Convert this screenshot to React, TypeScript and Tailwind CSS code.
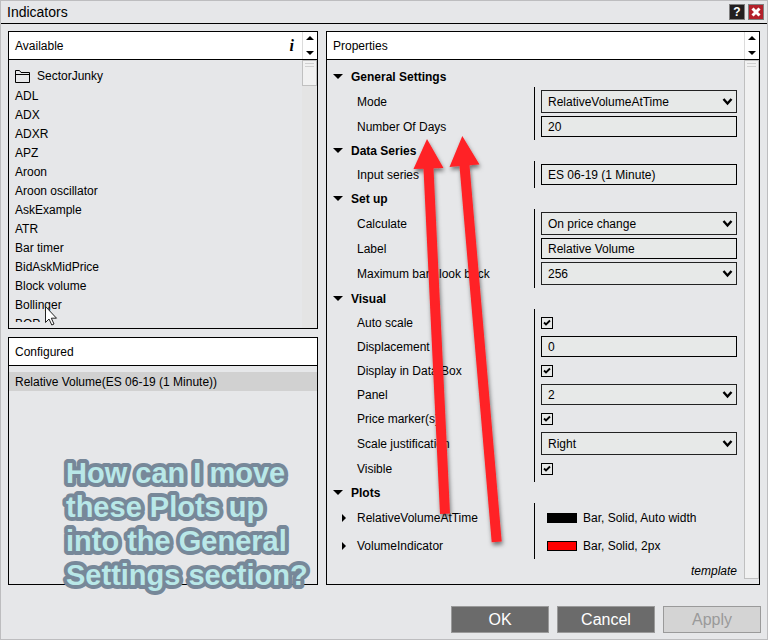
import { useState } from 'react';
import type { ReactNode } from 'react';

const available = [
  'ADL',
  'ADX',
  'ADXR',
  'APZ',
  'Aroon',
  'Aroon oscillator',
  'AskExample',
  'ATR',
  'Bar timer',
  'BidAskMidPrice',
  'Block volume',
  'Bollinger',
  'BOP',
];

function Spinner() {
  return (
    <div className="flex w-[15px] shrink-0 flex-col items-center justify-between border-l border-[#dcdcdc] py-1">
      <button aria-label="Previous">
        <svg className="block" width="8" height="4" viewBox="0 0 8 4">
          <path d="M0 4L4 0L8 4Z" />
        </svg>
      </button>
      <button aria-label="Next">
        <svg className="block" width="8" height="4" viewBox="0 0 8 4">
          <path d="M0 0L4 4L8 0Z" />
        </svg>
      </button>
    </div>
  );
}

function PanelHeader({ title, children }: { title: string; children?: ReactNode }) {
  return (
    <div className="flex h-7 shrink-0 border-b border-black bg-white">
      <h2 className="flex flex-1 items-center pl-[6px]">{title}</h2>
      {children}
    </div>
  );
}

function Thumb({ full = false }: { full?: boolean }) {
  return (
    <div className={`flex flex-col gap-[2px] border border-[#c0c0c0] bg-[#f1f1f1] px-[2px] pt-[2px] ${full ? 'flex-1' : 'h-[26px]'}`}>
      <div className="h-px bg-[#d0d0d0]" />
      <div className="h-px bg-[#d0d0d0]" />
    </div>
  );
}

function Section({ title, children }: { title: string; children: ReactNode }) {
  return (
    <section>
      <h3 className="flex h-[21px] items-center gap-2 pl-[6px] font-bold">
        <svg width="10" height="5" viewBox="0 0 10 5">
          <path d="M0 0H10L5 5Z" />
        </svg>
        {title}
      </h3>
      <div>{children}</div>
    </section>
  );
}

/* Each row draws its own slice of the vertical divider */
function Row({ label, id, children }: { label: string; id: string; children: ReactNode }) {
  return (
    <div className="group flex">
      <label htmlFor={id} className="flex w-[207px] shrink-0 items-center pt-[3px] pl-[30px] group-last:pb-[3px]">
        {label}
      </label>
      <div className="flex min-h-6 flex-1 items-center border-l border-black pt-[3px] pl-[6px] group-last:min-h-[27px] group-last:pb-[3px]">
        {children}
      </div>
    </div>
  );
}

function TextRow({ label, id, value }: { label: string; id: string; value: string }) {
  return (
    <Row label={label} id={id}>
      <input
        id={id}
        type="text"
        defaultValue={value}
        className="h-[21px] w-full border border-black bg-[#e7e9e8] pl-[6px] outline-none"
      />
    </Row>
  );
}

function SelectRow({ label, id, value, short = false }: { label: string; id: string; value: string; short?: boolean }) {
  return (
    <Row label={label} id={id}>
      <div className="relative w-full">
        <select
          id={id}
          defaultValue={value}
          className={`block w-full appearance-none border border-[#222222] bg-[#e7e9e8] pl-[6px] outline-none ${short ? 'h-[21px]' : 'h-[23px]'}`}
        >
          <option>{value}</option>
        </select>
        <svg className="pointer-events-none absolute inset-y-0 right-1 my-auto" width="11" height="9" viewBox="0 0 11 9" fill="none">
          <path d="M1.5 2L5.5 6.5L9.5 2" stroke="black" strokeWidth="2.4" />
        </svg>
      </div>
    </Row>
  );
}

function CheckRow({ label, id }: { label: string; id: string }) {
  const [on, setOn] = useState(true);
  return (
    <Row label={label} id={id}>
      <div className="relative">
        <input
          id={id}
          type="checkbox"
          checked={on}
          onChange={() => setOn(!on)}
          className="block h-3 w-3 appearance-none border border-black bg-[#e7e9e8]"
        />
        {on && (
          <svg className="pointer-events-none absolute inset-0" width="12" height="12" viewBox="0 0 12 12" fill="none">
            <path d="M3 5.5L5 7.5L9 3.5" stroke="black" strokeWidth="1.8" />
          </svg>
        )}
      </div>
    </Row>
  );
}

function PlotRow({ label, swatch, text }: { label: string; swatch: string; text: string }) {
  return (
    <div className="flex h-7">
      <button className="flex w-[207px] shrink-0 items-center gap-[11px] pt-[2px] pl-[15px] text-left">
        <svg width="4" height="8" viewBox="0 0 4 8">
          <path d="M0 0L4 4L0 8Z" />
        </svg>
        {label}
      </button>
      <div className="flex flex-1 items-center gap-[6px] border-l border-black pt-[2px] pl-3">
        <span className={`h-[10px] w-[30px] border border-black ${swatch}`} />
        {text}
      </div>
    </div>
  );
}

function Annotations() {
  return (
    <svg className="pointer-events-none absolute top-0 left-0" width="766" height="638" viewBox="1 1 766 638">
      <defs>
        <filter id="shadow" x="-50%" y="-10%" width="200%" height="120%">
          <feDropShadow dx="1" dy="3" stdDeviation="2" floodColor="#000000" floodOpacity="0.5" />
        </filter>
      </defs>
      <g fill="#ff2226" filter="url(#shadow)">
        <path d="M427 139L443.5 168L433.5 168.3L450 513.5L440 514L423.5 168.7L413.5 169Z" />
        <path d="M462.3 136L479.5 164.5L469.5 165.3L501.7 541.5L491.7 542.3L459.5 166L449.5 167Z" />
      </g>
      <text
        className="font-['Liberation_Sans',Arial,sans-serif] text-[29px] font-bold"
        fill="#b9e8e8"
        stroke="#778899"
        strokeWidth="8"
        strokeLinejoin="round"
        paintOrder="stroke"
      >
        <tspan x="66" y="483">How can I move</tspan>
        <tspan x="66" y="517">these Plots up</tspan>
        <tspan x="66" y="551">into the General</tspan>
        <tspan x="66" y="585">Settings section?</tspan>
      </text>
      <path
        d="M45.5 306.5V322.5L49 319L51.8 325L54 324L51.3 318.2H56.5Z"
        fill="white"
        stroke="#222222"
        strokeWidth="1"
      />
    </svg>
  );
}

export default function App() {
  return (
    <div className="relative flex min-h-screen flex-col border border-[#bdbdbf] bg-[#e6e7e9] font-['Liberation_Sans',Arial,sans-serif] text-xs text-black">
      <header className="flex h-[23px] items-center border-b border-black pr-[3px] pl-[6px]">
        <h1 className="flex-1 text-sm">Indicators</h1>
        <div className="flex gap-[3px]">
          <button
            aria-label="Help"
            className="flex h-4 w-4 items-center justify-center border border-[#808080] bg-[#231f20] text-xs font-bold text-white"
          >
            ?
          </button>
          <button aria-label="Close" className="flex h-4 w-4 items-center justify-center border border-[#808080] bg-[#b3202a]">
            <svg width="10" height="10" viewBox="0 0 10 10">
              <path d="M1.5 1.5L8.5 8.5M8.5 1.5L1.5 8.5" stroke="white" strokeWidth="3" />
            </svg>
          </button>
        </div>
      </header>

      <main className="grid grid-cols-[5fr_7fr] gap-2 px-[7px] pt-[7px]">
        <div className="flex flex-col gap-2">
          {/* Available */}
          <section className="flex h-[298px] flex-col border border-black">
            <PanelHeader title="Available">
              <button
                aria-label="Information"
                className="pr-2 font-['Liberation_Serif',serif] text-base font-bold italic"
              >
                i
              </button>
              <Spinner />
            </PanelHeader>
            <div className="flex min-h-0 flex-1">
              <div className="mb-[6px] flex-1 overflow-hidden pt-[6px] pl-[6px]">
                <div className="flex h-5 items-center gap-[7px]">
                  <svg width="15" height="13" viewBox="0 0 15 13" fill="none">
                    <path d="M0.5 12.5V0.5H4.5L6 2.5H14.5V12.5ZM0.5 4.5H14.5" stroke="black" />
                  </svg>
                  SectorJunky
                </div>
                <ul>
                  {available.map((name) => (
                    <li key={name} className="h-[19px] leading-[21px]">
                      {name}
                    </li>
                  ))}
                </ul>
              </div>
              <div className="w-[15px] bg-[#e4e4e4]">
                <Thumb />
              </div>
            </div>
          </section>

          {/* Configured */}
          <section className="flex flex-1 flex-col border border-black">
            <PanelHeader title="Configured" />
            <div className="mt-[6px] h-[19px] bg-[#d1d1d1] pl-[6px] leading-[21px]">Relative Volume(ES 06-19 (1 Minute))</div>
          </section>
        </div>

        {/* Properties */}
        <section className="flex flex-col border border-black">
          <PanelHeader title="Properties">
            <Spinner />
          </PanelHeader>
          <div className="flex flex-1">
            <div className="flex-1 pt-[6px] pr-[7px] pb-[5px]">
              <Section title="General Settings">
                <SelectRow label="Mode" id="mode" value="RelativeVolumeAtTime" />
                <TextRow label="Number Of Days" id="days" value="20" />
              </Section>
              <Section title="Data Series">
                <TextRow label="Input series" id="series" value="ES 06-19 (1 Minute)" />
              </Section>
              <Section title="Set up">
                <SelectRow label="Calculate" id="calculate" value="On price change" />
                <TextRow label="Label" id="label" value="Relative Volume" />
                <SelectRow label="Maximum bars look back" id="lookback" value="256" />
              </Section>
              <Section title="Visual">
                <CheckRow label="Auto scale" id="autoscale" />
                <TextRow label="Displacement" id="displacement" value="0" />
                <CheckRow label="Display in Data Box" id="databox" />
                <SelectRow label="Panel" id="panel" value="2" short />
                <CheckRow label="Price marker(s)" id="markers" />
                <SelectRow label="Scale justification" id="justification" value="Right" />
                <CheckRow label="Visible" id="visible" />
              </Section>
              <Section title="Plots">
                <PlotRow label="RelativeVolumeAtTime" swatch="bg-black" text="Bar, Solid, Auto width" />
                <PlotRow label="VolumeIndicator" swatch="bg-[#ff0000]" text="Bar, Solid, 2px" />
              </Section>
              <div className="pt-1 text-right">
                <a href="#template" className="italic">
                  template
                </a>
              </div>
            </div>
            <div className="mb-[5px] flex w-[15px] flex-col">
              <Thumb full />
            </div>
          </div>
        </section>
      </main>

      <footer className="mt-auto flex justify-end gap-2 px-[6px] pt-[21px] pb-[6px] text-base text-white">
        <button className="h-[27px] w-[98px] border border-[#9a9a9a] bg-[#6b6b6b]">OK</button>
        <button className="h-[27px] w-[98px] border border-[#9a9a9a] bg-[#6b6b6b]">Cancel</button>
        <button disabled className="h-[27px] w-[98px] border border-[#9a9a9a] bg-[#d4d4d4] text-[#9a9a9a]">
          Apply
        </button>
      </footer>

      <Annotations />
    </div>
  );
}
